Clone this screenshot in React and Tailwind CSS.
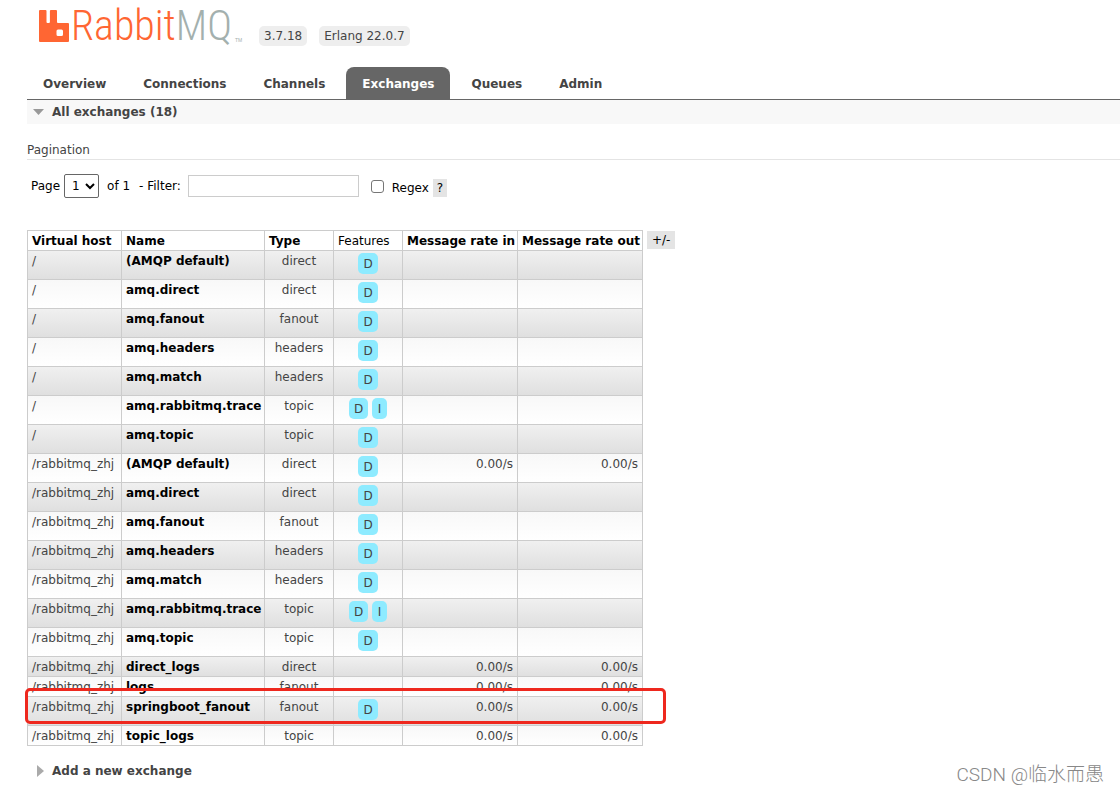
import React from "react";

const tabs = ["Overview", "Connections", "Channels", "Exchanges", "Queues", "Admin"];

const V = "/rabbitmq_zhj";
const exchanges = [
  ["/", "(AMQP default)", "direct", "D", false],
  ["/", "amq.direct", "direct", "D", false],
  ["/", "amq.fanout", "fanout", "D", false],
  ["/", "amq.headers", "headers", "D", false],
  ["/", "amq.match", "headers", "D", false],
  ["/", "amq.rabbitmq.trace", "topic", "DI", false],
  ["/", "amq.topic", "topic", "D", false],
  [V, "(AMQP default)", "direct", "D", true],
  [V, "amq.direct", "direct", "D", false],
  [V, "amq.fanout", "fanout", "D", false],
  [V, "amq.headers", "headers", "D", false],
  [V, "amq.match", "headers", "D", false],
  [V, "amq.rabbitmq.trace", "topic", "DI", false],
  [V, "amq.topic", "topic", "D", false],
  [V, "direct_logs", "direct", "", true],
  [V, "logs", "fanout", "", true],
  [V, "springboot_fanout", "fanout", "D", true],
  [V, "topic_logs", "topic", "", true],
];

function Logo() {
  return (
    <a href="#home" aria-label="RabbitMQ" className="flex h-11 items-end">
      <svg className="mb-[2px]" width="30" height="32" viewBox="0 0 30 32" aria-hidden="true">
        <path
          fill="#ff6633"
          fillRule="evenodd"
          d="M1 0H6.5Q7.5 0 7.5 1V12Q7.5 13 8.5 13H9.9Q10.9 13 10.9 12V1Q10.9 0 11.9 0H17Q18 0 18 1V12Q18 13 19 13H29Q30 13 30 14V31Q30 32 29 32H1Q0 32 0 31V1Q0 0 1 0ZM19 19.5Q17.5 19.5 17.5 21V24.5Q17.5 26 19 26H22.5Q24 26 24 24.5V21Q24 19.5 22.5 19.5Z"
        />
      </svg>
      <span className="ml-[2px] font-['Roboto_Condensed_Light','Roboto_Condensed',sans-serif] text-[42px] leading-9 text-[#ff6633]">
        Rabbit<span className="text-[#a3b0ae]">MQ</span>
      </span>
      <span className="ml-[3px] font-['Liberation_Sans',sans-serif] text-[5px] leading-[8px] text-[#a3b0ae]">TM</span>
    </a>
  );
}

function Feature({ children }) {
  return (
    <abbr className="inline-flex h-[21px] min-w-[15px] items-center justify-center rounded-[5px] bg-[#8eebff] px-[5px] text-[#444]">
      {children}
    </abbr>
  );
}

function Row({ item, odd }) {
  const [vhost, name, type, features, rates] = item;
  const rate = rates ? "0.00/s" : "";
  const cell = "border border-[#ccc] px-1 pt-px align-top ";
  return (
    <tr
      className={
        (features ? "h-[29px] " : "h-5 ") +
        (odd ? "bg-linear-to-b from-[#f0f0f0] to-[#dfdfdf]" : "bg-linear-to-b from-[#f8f8f8] to-white")
      }
    >
      <td className={cell}>{vhost}</td>
      <td className={cell + "font-bold text-black"}>
        <a href="#exchange">{name}</a>
      </td>
      <td className={cell + "text-center"}>{type}</td>
      <td className={cell}>
        <div className="flex justify-center gap-1 pt-px">
          {features.split("").map((f) => (
            <Feature key={f}>{f}</Feature>
          ))}
        </div>
      </td>
      <td className={cell + "text-right"}>{rate}</td>
      <td className={cell + "text-right"}>{rate}</td>
    </tr>
  );
}

export default function App() {
  const head = "border border-[#ccc] px-1 text-left whitespace-nowrap ";
  return (
    <div className="relative min-h-screen bg-white pl-[27px] font-['Verdana','DejaVu_Sans',sans-serif] text-[12px] leading-[18px] text-[#444]">
      <header className="flex h-[46px] items-end justify-start pl-3">
        <div className="mb-[2px] w-[206px]">
          <Logo />
        </div>
        <div className="ml-[14px] flex gap-3">
          <span className="rounded-[5px] bg-[#eee] px-[5px] py-px">3.7.18</span>
          <span className="rounded-[5px] bg-[#eee] px-[5px] py-px">Erlang 22.0.7</span>
        </div>
      </header>

      <nav className="mt-[21px] flex gap-[5px] border-b border-[#666]">
        {tabs.map((t) => (
          <a
            key={t}
            href={"#" + t.toLowerCase()}
            className={
              "flex h-8 items-center rounded-t-[8px] px-4 pt-[2px] font-bold " + (t === "Exchanges" ? "bg-[#666] text-white" : "")
            }
          >
            {t}
          </a>
        ))}
      </nav>

      <main>
        <h2>
          <button className="flex h-6 w-full items-center gap-2 bg-[#f8f8f8] pl-[6px] font-bold">
            <svg width="11" height="6" viewBox="0 0 11 6" aria-hidden="true">
              <path d="M0 0H11L5.5 6Z" fill="#999" />
            </svg>
            All exchanges (18)
          </button>
        </h2>

        <h3 className="mt-[17px] border-b border-[#e4e4e4]">Pagination</h3>

        <div className="mt-[14px] flex items-center pl-1 text-black">
          <label htmlFor="page">Page</label>
          <div className="relative ml-1 flex items-center">
            <select
              id="page"
              className="h-6 w-[35px] appearance-none rounded-[2px] border border-[#666] bg-white pl-[7px]"
              defaultValue="1"
            >
              <option>1</option>
            </select>
            <svg className="pointer-events-none absolute right-1" width="10" height="7" viewBox="0 0 10 7" aria-hidden="true">
              <path d="M1 1L5 5L9 1" fill="none" stroke="#000" strokeWidth="2" />
            </svg>
          </div>
          <span className="ml-2">of 1</span>
          <label htmlFor="filter" className="ml-[9px]">- Filter:</label>
          <input id="filter" type="text" className="ml-[7px] h-[22px] w-[171px] border border-[#ccc] bg-white px-1" />
          <input id="regex" type="checkbox" className="ml-3 size-[13px] appearance-none rounded-[3px] border border-[#767676] bg-white checked:bg-[#666]" />
          <label htmlFor="regex" className="ml-2 pt-1">Regex</label>
          <button className="mt-1 ml-1 bg-[#e4e4e4] px-1">?</button>
        </div>

        <div className="mt-8 flex items-start gap-1">
          <div className="relative">
            <table className="w-[616px] table-fixed border-collapse">
              <colgroup>
                <col className="w-[94px]" />
                <col className="w-[143px]" />
                <col className="w-[69px]" />
                <col className="w-[69px]" />
                <col className="w-[115px]" />
                <col className="w-[125px]" />
              </colgroup>
              <thead className="text-black">
                <tr className="h-5">
                  <th className={head}>Virtual host</th>
                  <th className={head}>Name</th>
                  <th className={head}>Type</th>
                  <th className={head + "font-normal"}>Features</th>
                  <th className={head}>Message rate in</th>
                  <th className={head}>Message rate out</th>
                </tr>
              </thead>
              <tbody>
                {exchanges.map((e, i) => (
                  <Row key={e[0] + e[1]} item={e} odd={i % 2 === 0} />
                ))}
              </tbody>
            </table>
            <div className="pointer-events-none absolute bottom-[22px] left-[-2px] h-9 w-[641px] rounded-[5px] border-[3px] border-[#ee281e]" />
          </div>
          <button className="mt-px bg-[#e4e4e4] px-[5px] text-black">+/-</button>
        </div>

        <h2 className="mt-4">
          <button className="flex items-center gap-2 pl-[10px] font-bold">
            <svg width="7" height="12" viewBox="0 0 7 12" aria-hidden="true">
              <path d="M0 0L7 6L0 12Z" fill="#aaa" />
            </svg>
            Add a new exchange
          </button>
        </h2>
      </main>

      <div className="absolute right-4 bottom-[6px] font-['Roboto','Noto_Sans_CJK_SC',sans-serif] text-[19px] font-light leading-6 text-[#888]">
        CSDN @临水而愚
      </div>
    </div>
  );
}
